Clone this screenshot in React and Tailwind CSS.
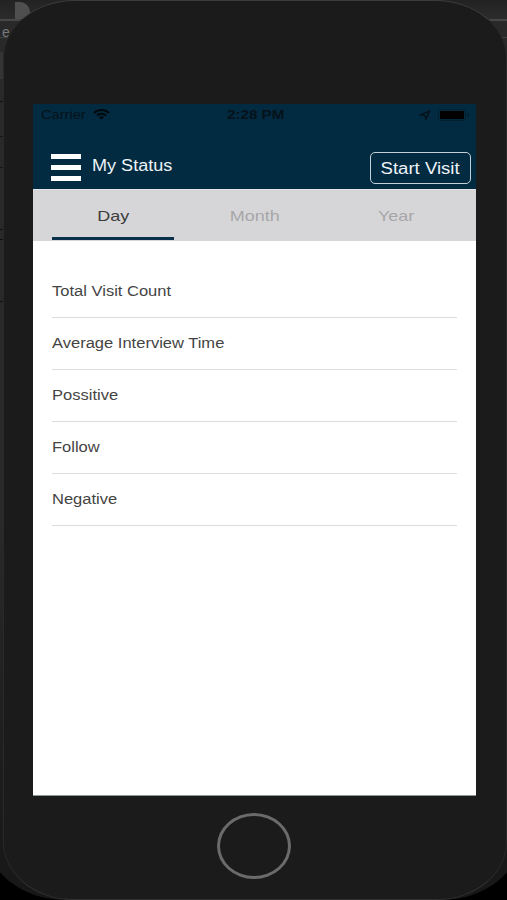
import { useState } from "react";

const tabs = ["Day", "Month", "Year"];

const rows = ["Total Visit Count", "Average Interview Time", "Possitive", "Follow", "Negative"];

// Editor window that sits behind the simulator
function Backdrop() {
  return (
    <div className="absolute inset-0 overflow-hidden bg-black">
      <div className="absolute -inset-x-[14px] -top-10 bottom-0 rounded-b-[80px_64px] bg-linear-to-b from-[#292929] from-60% to-[#171717]" />
      <div className="absolute inset-x-0 top-0 h-[19px] bg-linear-to-b from-[#222] to-[#2c2c2c]" />
      <div className="absolute inset-x-0 top-[19px] h-[2px] bg-[#474747]" />
      <div className="absolute inset-x-0 top-[37px] h-px bg-[#434343]" />
      <div className="absolute left-0 top-[52px] h-[27px] w-[3px] bg-[#343434]" />
      <div className="absolute left-0 top-[101px] h-px w-[3px] bg-[#111]" />
      <div className="absolute left-0 top-[136px] h-px w-[3px] bg-[#151515]" />
      <div className="absolute left-0 top-[167px] h-px w-[3px] bg-[#151515]" />
      <div className="absolute left-0 top-[229px] h-px w-[3px] bg-[#111]" />
      <div className="absolute left-0 top-[239px] h-px w-[3px] bg-[#111]" />
      <div className="absolute left-0 top-[301px] h-px w-[3px] bg-[#111]" />
      <div className="absolute left-[15px] top-[2px] h-[17px] w-[15px] rounded-tr-[10px] bg-[#4f4f4f]" />
      <span className="absolute left-[2px] top-[23px] text-[14px] leading-[18px] text-[#777]">e</span>
    </div>
  );
}

function StatusBar() {
  return (
    <div className="flex h-[21px] items-center justify-between px-[7px] text-[12px] text-[#06121a]">
      <div className="flex w-[120px] items-center">
        <span className="w-[53px] pl-px">
          <span className="inline-block origin-left scale-x-[1.22]">Carrier</span>
        </span>
        <svg className="h-[11px] w-[17px]" viewBox="0 0 17 11" fill="none" stroke="#02080c">
          <path d="M1 4C5.2 .1 11.8 .1 16 4" strokeWidth="2" />
          <path d="M3.9 6.5C6.5 4.1 10.5 4.1 13.1 6.5" strokeWidth="1.9" />
          <path d="M6 8.2C7.4 6.9 9.6 6.9 11 8.2L8.5 10.6Z" fill="#02080c" stroke="none" />
        </svg>
      </div>
      <span className="inline-block scale-x-[1.27] font-bold">2:28 PM</span>
      <div className="flex w-[117px] items-center justify-end gap-[7px]">
        <svg className="h-[10px] w-[12px]" viewBox="0 0 12 10" fill="none" stroke="#06121a" strokeWidth="1.3">
          <path d="M1 5.2L10.9 .8L6.8 9.4L6 5.4Z" strokeLinejoin="round" />
        </svg>
        <div className="flex items-center gap-px">
          <div className="rounded-[2px] border border-[#02202f] p-px">
            <div className="h-[8px] w-[24px] bg-black" />
          </div>
          <div className="h-[4px] w-[2px] rounded-r bg-[#02202f]" />
        </div>
      </div>
    </div>
  );
}

function Header() {
  return (
    <div className="flex h-[64px] items-start justify-between pl-[18px] pr-[5px] text-white">
      <div className="flex items-start">
        <button className="mt-[29px] flex w-[30px] flex-col gap-[6px]" aria-label="Menu">
          <span className="h-[5px] w-full bg-white" />
          <span className="h-[5px] w-full bg-white" />
          <span className="h-[5px] w-full bg-white" />
        </button>
        <h1 className="ml-[11px] mt-[30px] origin-left scale-x-[1.13] whitespace-nowrap text-[16px] leading-[22px] text-[#edf3f7]">
          My Status
        </h1>
      </div>
      <button className="mt-[27px] flex h-[32px] w-[101px] items-center justify-center rounded-[5px] border-[1.5px] border-[#c3d0d8] text-[16px] text-[#edf3f7]">
        <span className="inline-block translate-y-px scale-x-[1.16] whitespace-nowrap">Start Visit</span>
      </button>
    </div>
  );
}

export default function App() {
  const [active, setActive] = useState("Day");

  return (
    <div className="relative h-[900px] w-[507px] overflow-hidden font-['Liberation_Sans',Arial,sans-serif]">
      <Backdrop />

      {/* Phone body */}
      <div className="relative ml-[3px] flex h-[900px] w-[504px] flex-col items-center rounded-t-[72px_58px] rounded-b-[70px_58px] border border-x-[#292929] border-t-[#3d3d3d] border-b-[#303030] bg-[#1b1b1b]">
        <div className="mr-px mt-[103px] flex h-[692px] w-[443px] shrink-0 flex-col border-b border-[#8e9997] bg-white">
          <div className="h-[85px] bg-[#022b42]">
            <StatusBar />
            <Header />
          </div>

          <div className="grid h-[52px] grid-cols-[122px_121px_122px] gap-[20px] border-t border-[#e4e4e6] bg-[#d6d6d8] px-[19px]">
            {tabs.map((tab) => (
              <button
                key={tab}
                onClick={() => setActive(tab)}
                className={
                  active === tab
                    ? "flex h-[50px] items-center justify-center border-b-[3px] border-[#0b3049] pt-[5px] text-[15px] text-[#3c3c3c]"
                    : "flex h-[50px] items-center justify-center border-b-[3px] border-transparent pt-[5px] text-[15px] text-[#a6a6a8]"
                }
              >
                <span className="inline-block scale-x-[1.2]">{tab}</span>
              </button>
            ))}
          </div>

          <ul className="px-[19px] pt-[25px]">
            {rows.map((row) => (
              <li key={row} className="flex h-[52px] items-center border-b border-[#dcdcdc] text-[14px] text-[#444]">
                <span className="inline-block origin-left scale-x-[1.18] whitespace-nowrap">{row}</span>
              </li>
            ))}
          </ul>
        </div>

        {/* Home button */}
        <div className="mr-[2px] mt-[17px] h-[66px] w-[74px] shrink-0 rounded-[50%] border-[3px] border-[#6b6b6b]" />
      </div>
    </div>
  );
}
